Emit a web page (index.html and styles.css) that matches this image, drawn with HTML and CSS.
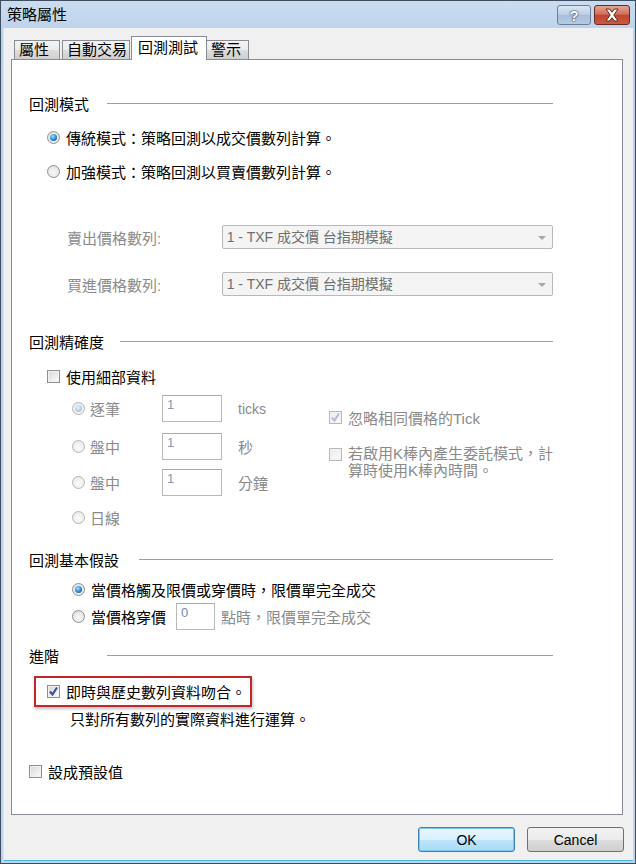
FILE: index.html
```html
<!DOCTYPE html>
<html lang="zh-Hant">
<head>
  <meta charset="UTF-8">
  <title>策略屬性</title>
  <link rel="stylesheet" href="styles.css">
</head>
<body>
  <div class="window">
    <!-- barra de título -->
    <div class="titlebar">
      <span class="title">策略屬性</span>
      <div class="caption">
        <span class="cap-btn help">?</span>
        <span class="cap-btn close">
          <svg width="16" height="14" viewBox="0 0 16 14"><path d="M2 1h3.5L8 4.2 10.5 1H14l-4.2 6L14 13h-3.5L8 9.8 5.5 13H2l4.2-6z" fill="#fff" stroke="#5a2a22" stroke-width="1"/></svg>
        </span>
      </div>
    </div>

    <div class="client">
      <div class="tabs">
        <span class="tab t1">屬性</span>
        <span class="tab t2">自動交易</span>
        <span class="tab t3 active">回測測試</span>
        <span class="tab t4">警示</span>
      </div>

      <div class="panel">
        <!-- 回測模式 -->
        <div class="sec s1"><span class="sec-label short">回測模式</span><span class="sec-line"></span></div>
        <div class="opt lvl1 r-a"><span class="radio on"></span>傳統模式：策略回測以成交價數列計算。</div>
        <div class="opt lvl1 r-b"><span class="radio"></span>加強模式：策略回測以買賣價數列計算。</div>
        <div class="field f1">
          <span class="field-label">賣出價格數列:</span>
          <span class="combo">1 - TXF 成交價 台指期模擬<span class="arrow"></span></span>
        </div>
        <div class="field f2">
          <span class="field-label">買進價格數列:</span>
          <span class="combo">1 - TXF 成交價 台指期模擬<span class="arrow"></span></span>
        </div>

        <!-- 回測精確度 -->
        <div class="sec s2"><span class="sec-label gap">回測精確度</span><span class="sec-line"></span></div>
        <div class="opt lvl1 c-detail"><span class="check"></span>使用細部資料</div>
        <div class="detail">
          <div class="detail-left">
            <div class="sub d1"><span class="sub-label"><span class="radio on dis"></span>逐筆</span><span class="tb">1</span><span class="unit latin">ticks</span></div>
            <div class="sub d2"><span class="sub-label"><span class="radio dis"></span>盤中</span><span class="tb">1</span><span class="unit">秒</span></div>
            <div class="sub d3"><span class="sub-label"><span class="radio dis"></span>盤中</span><span class="tb">1</span><span class="unit">分鐘</span></div>
            <div class="sub d4"><span class="sub-label"><span class="radio dis"></span>日線</span></div>
          </div>
          <div class="detail-right">
            <div class="opt muted k1"><span class="check on dis"><svg width="11" height="11" viewBox="0 0 11 11"><path d="M2 5.5l2.5 3L9 1.5" fill="none" stroke="#b4bdd6" stroke-width="2"/></svg></span>忽略相同價格的Tick</div>
            <div class="opt muted k2"><span class="check dis"></span><span class="wrap">若啟用K棒內產生委託模式，計<br>算時使用K棒內時間。</span></div>
          </div>
        </div>

        <!-- 回測基本假設 -->
        <div class="sec s3"><span class="sec-label gap wide">回測基本假設</span><span class="sec-line"></span></div>
        <div class="opt lvl2 b1"><span class="radio on"></span>當價格觸及限價或穿價時，限價單完全成交</div>
        <div class="opt lvl2 b2"><span class="radio"></span>當價格穿價<span class="tb small">0</span><span class="muted-text">點時，限價單完全成交</span></div>

        <!-- 進階 -->
        <div class="sec s4"><span class="sec-label short">進階</span><span class="sec-line"></span></div>
        <div class="highlight">
          <div class="opt"><span class="check on"><svg width="11" height="11" viewBox="0 0 11 11"><path d="M2 5.5l2.5 3L9 1.5" fill="none" stroke="#3b4f96" stroke-width="2.2"/></svg></span>即時與歷史數列資料吻合。</div>
        </div>
        <div class="note">只對所有數列的實際資料進行運算。</div>

        <div class="opt c-default"><span class="check"></span>設成預設值</div>
      </div>

      <div class="footer">
        <button class="btn default">OK</button>
        <button class="btn">Cancel</button>
      </div>
    </div>
  </div>
</body>
</html>
```

FILE: styles.css
```css
* { box-sizing: border-box; }
body {
  margin: 0;
  font-family: "Liberation Sans", "Noto Sans CJK TC", sans-serif;
  font-size: 15px;
  color: #000;
}
.window {
  width: 636px;
  height: 864px;
  border: 1px solid #3e4e60;
  background: linear-gradient(#cbdcef, #b8d0ea 40px, #bcd4ec);
  display: flex;
  flex-direction: column;
}
/* barra de título */
.titlebar {
  height: 27px;
  display: flex;
  align-items: flex-start;
  justify-content: space-between;
  padding-left: 6px;
}
.title {
  line-height: 28px;
  font-size: 15px;
}
.caption {
  display: flex;
  gap: 3px;
  margin-top: 4px;
  margin-right: 5px;
}
.cap-btn {
  height: 20px;
  border-radius: 3px;
  display: flex;
  align-items: center;
  justify-content: center;
}
.help {
  width: 34px;
  border: 1px solid #6d7f96;
  background: linear-gradient(#d9e6f4, #b9cde4 50%, #a6bfdb 51%, #b4cbe4);
  color: #fff;
  font-weight: bold;
  font-size: 15px;
  text-shadow: 0 0 2px #334, 0 0 1px #223;
}
.close {
  width: 36px;
  border: 1px solid #6a2a20;
  background: linear-gradient(#e6a592, #d0705c 45%, #c04530 52%, #c85a40);
}
/* área cliente */
.client {
  flex: 1;
  margin: 0 2px 2px 2px;
  background: #f0f0f0;
  border-left: 1px solid #d7e6f3;
  border-bottom: 1px solid #4ab3e2;
  display: flex;
  flex-direction: column;
}
.tabs {
  height: 31px;
  display: flex;
  align-items: flex-end;
  padding-left: 10px;
}
.tab {
  height: 19px;
  border: 1px solid #898c95;
  border-bottom: none;
  background: linear-gradient(#f3f3f3, #ebebeb 50%, #dddddd 51%, #cfcfcf);
  line-height: 18px;
  padding-left: 4px;
  white-space: nowrap;
}
.t1 { width: 46px; }
.t2 { width: 68px; margin-left: 2px; }
.t3 { width: 76px; margin-left: 1px; }
.t4 { width: 43px; margin-left: -1px; }
.tab.active {
  height: 24px;
  margin-bottom: -1px;
  background: #fff;
  position: relative;
  z-index: 2;
  padding-left: 6px;
  line-height: 22px;
}
.panel {
  position: relative;
  z-index: 1;
  margin-left: 7px;
  width: 612px;
  height: 756px;
  border: 1px solid #898c95;
  background: #fff;
  padding: 0 69px 0 17px;
  display: flex;
  flex-direction: column;
}
/* títulos de sección */
.sec {
  height: 20px;
  display: flex;
  align-items: center;
}
.sec-label.short { min-width: 78px; }
.sec-label.gap { margin-right: 16px; }
.sec-label.wide { margin-right: 20px; }
.sec-line {
  flex: 1;
  height: 1px;
  background: #a0a0a0;
}
.s1 { margin-top: 33px; }
.s2 { margin-top: 35px; }
.s3 { margin-top: 22px; }
.s4 { margin-top: 15px; }
/* opciones */
.opt {
  height: 20px;
  display: flex;
  align-items: center;
  white-space: nowrap;
}
.lvl1 { padding-left: 18px; }
.lvl2 { padding-left: 43px; }
.r-a { margin-top: 14px; }
.r-b { margin-top: 14px; }
.c-detail { margin-top: 15px; }
.b1 { margin-top: 10px; }
.b2 { margin-top: 3px; height: 28px; }
.c-default { margin-top: 31px; }
.radio {
  width: 13px;
  height: 13px;
  border-radius: 50%;
  border: 1px solid #8e8f8f;
  background: radial-gradient(circle at 50% 60%, #f8f8f8, #dcdcdc);
  margin-right: 6px;
  position: relative;
  flex: none;
}
.radio.on::after {
  content: "";
  position: absolute;
  left: 2px;
  top: 2px;
  width: 7px;
  height: 7px;
  border-radius: 50%;
  background: radial-gradient(circle at 40% 35%, #9fe0ff, #2a85d8 55%, #0e3f86);
}
.radio.dis {
  border-color: #b5b5b5;
  background: radial-gradient(circle at 50% 60%, #fbfbfb, #e6e6e6);
}
.radio.on.dis::after {
  background: radial-gradient(circle at 40% 35%, #e2f2fb, #a9d0e8 60%, #8fb8d4);
}
.check {
  width: 13px;
  height: 13px;
  border: 1px solid #8e8f8f;
  background: linear-gradient(135deg, #d6d6d6, #fdfdfd);
  box-shadow: inset 0 0 0 1px #f2f2f2;
  margin-right: 6px;
  flex: none;
  display: flex;
  align-items: center;
  justify-content: center;
}
.check.dis {
  border-color: #b8b8b8;
  background: linear-gradient(135deg, #eaeaea, #fcfcfc);
}
/* listas desplegables */
.field {
  height: 24px;
  display: flex;
  align-items: center;
  color: #8a8a8a;
}
.f1 { margin-top: 44px; }
.f2 { margin-top: 23px; }
.field-label {
  margin-left: 38px;
  width: 155px;
}
.combo {
  position: relative;
  width: 332px;
  height: 24px;
  border: 1px solid #b8b8b8;
  border-radius: 2px;
  background: #f4f4f4;
  color: #6e6e6e;
  font-size: 14px;
  line-height: 22px;
  padding-left: 4px;
}
.arrow {
  position: absolute;
  right: 6px;
  top: 10px;
  border-left: 4px solid transparent;
  border-right: 4px solid transparent;
  border-top: 4px solid #a8a8a8;
}
/* detalle */
.detail {
  display: flex;
}
.detail-left {
  width: 306px;
  padding-left: 43px;
}
.sub {
  height: 27px;
  display: flex;
  align-items: center;
  color: #8a8a8a;
}
.d1 { margin-top: 9px; }
.d2 { margin-top: 11px; }
.d3 { margin-top: 9px; }
.d4 { margin-top: 11px; height: 20px; }
.sub-label {
  width: 90px;
  display: flex;
  align-items: center;
}
.sub-label .radio { margin-right: 5px; }
.tb {
  width: 60px;
  height: 27px;
  align-self: stretch;
  border: 1px solid #b8b8b8;
  border-top-color: #a8aab0;
  background: #fff;
  color: #8796b3;
  font-family: "Liberation Sans", sans-serif;
  font-size: 13px;
  line-height: 16px;
  padding: 1px 4px;
}
.unit {
  margin-left: 16px;
}
.unit.latin {
  font-size: 14px;
}
.detail-right .opt { color: #8a8a8a; }
.k1 { margin-top: 21px; }
.k2 {
  margin-top: 18px;
  height: auto;
  align-items: flex-start;
}
.k2 .check { margin-top: 3px; }
.wrap {
  line-height: 17px;
  white-space: nowrap;
}
.tb.small {
  width: 39px;
  height: 27px;
  align-self: center;
  margin-left: 10px;
  margin-right: 6px;
  color: #6f87b5;
}
.muted-text { color: #8a8a8a; }
/* recuadro rojo */
.highlight {
  margin-top: 11px;
  margin-left: 5px;
  width: 218px;
  height: 31px;
  border: 2px solid #c4262c;
  box-shadow: 1px 2px 3px rgba(0, 0, 0, 0.25);
  padding-left: 11px;
  display: flex;
  align-items: center;
}
.note {
  margin-top: 3px;
  height: 20px;
  line-height: 20px;
  padding-left: 41px;
}
/* botones */
.footer {
  display: flex;
  justify-content: flex-end;
  gap: 12px;
  padding-right: 9px;
  margin-top: 12px;
}
.btn {
  width: 97px;
  height: 25px;
  border: 1px solid #707070;
  border-radius: 3px;
  background: linear-gradient(#f2f2f2, #ebebeb 50%, #dddddd 51%, #cfcfcf);
  font-family: "Liberation Sans", sans-serif;
  font-size: 14px;
  color: #000;
  padding: 0;
}
.btn.default {
  border-color: #3c7fb1;
  background: linear-gradient(#eaf6fd, #d9f0fc 50%, #bee6fd 51%, #a7d9f5);
  box-shadow: inset 0 0 0 1px #7ec9f0;
}
```
